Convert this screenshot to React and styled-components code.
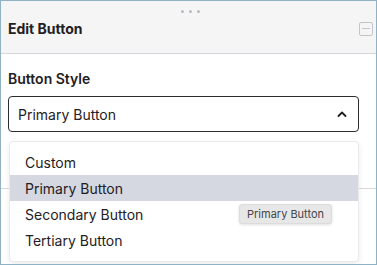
import React from "react";
import styled, { createGlobalStyle } from "styled-components";

const GlobalStyle = createGlobalStyle`
  body {
    margin: 0;
    font-family: Inter, "Liberation Sans", sans-serif;
    color: #1f2023;
  }
`;

const Frame = styled.div`
  position: relative;
  width: 377px;
  height: 265px;
  box-sizing: border-box;
  border: 1px solid #8fb2c5;
  background: #fff;
  overflow: hidden;
`;

const Header = styled.div`
  height: 53px;
  box-sizing: border-box;
  background: #f5f5f6;
  border-bottom: 1px solid #d5d8de;
  display: flex;
  flex-direction: column;
  padding: 9px 3px 0 7px;
`;

const Handle = styled.div`
  display: flex;
  justify-content: center;
  gap: 5px;
  height: 4px;
`;

const Dot = styled.span`
  width: 3px;
  height: 3px;
  border-radius: 50%;
  background: #b8bcc4;
`;

const TitleRow = styled.div`
  display: flex;
  align-items: center;
  justify-content: space-between;
  margin-top: 6px;
`;

const Title = styled.h2`
  margin: 0;
  font-size: 14px;
  font-weight: 700;
  color: #1f2023;
`;

const CollapseBox = styled.span`
  width: 14px;
  height: 14px;
  box-sizing: border-box;
  border: 1.5px solid #c3c5cc;
  border-radius: 2px;
  display: flex;
  align-items: center;
  justify-content: center;

  &::after {
    content: "";
    width: 8px;
    height: 1.5px;
    background: #c3c5cc;
  }
`;

const Section = styled.div`
  height: 135px;
  box-sizing: border-box;
  border-bottom: 1px solid #d5d8de;
  padding: 16px 17px 0 7px;
`;

const Label = styled.div`
  font-size: 14px;
  font-weight: 600;
  margin-bottom: 9px;
  height: 17px;
`;

const Select = styled.div`
  height: 36px;
  box-sizing: border-box;
  border: 1px solid #2b2c30;
  border-radius: 4px;
  display: flex;
  align-items: center;
  justify-content: space-between;
  padding: 0 10px 0 9px;
  font-size: 14px;
`;

const Menu = styled.ul`
  position: absolute;
  left: 8px;
  top: 140px;
  width: 350px;
  margin: 0;
  padding: 7px 0 8px;
  list-style: none;
  box-sizing: border-box;
  background: #fff;
  border: 1px solid #e9e9ee;
  border-radius: 4px;
  box-shadow: 0 2px 6px rgba(0, 0, 0, 0.08);
`;

const Option = styled.li`
  height: 26px;
  display: flex;
  align-items: center;
  padding-left: 15px;
  font-size: 14px;
  color: #1f2023;
  background: ${(props) => (props.active ? "#d5d8e1" : "transparent")};
`;

const Tooltip = styled.div`
  position: absolute;
  left: 238px;
  top: 203px;
  height: 20px;
  box-sizing: border-box;
  padding: 0 7px;
  display: flex;
  align-items: center;
  font-size: 11px;
  color: #454649;
  background: #e7e7e8;
  border: 1px solid #dcdcde;
  border-radius: 3px;
  box-shadow: 0 1px 3px rgba(0, 0, 0, 0.12);
`;

const Chevron = () => (
  <svg width="12" height="8" viewBox="0 0 12 8" fill="none">
    <path
      d="M2.5 6L6 2.5L9.5 6"
      stroke="#1f2023"
      strokeWidth="1.8"
      strokeLinecap="round"
      strokeLinejoin="round"
    />
  </svg>
);

const options = ["Custom", "Primary Button", "Secondary Button", "Tertiary Button"];

const App = () => {
  const selected = "Primary Button";

  return (
    <Frame>
      <GlobalStyle />
      <Header>
        <Handle>
          <Dot />
          <Dot />
          <Dot />
        </Handle>
        <TitleRow>
          <Title>Edit Button</Title>
          <CollapseBox />
        </TitleRow>
      </Header>

      <Section>
        <Label>Button Style</Label>
        <Select>
          {selected}
          <Chevron />
        </Select>
      </Section>

      <Menu>
        {options.map((option) => (
          <Option key={option} active={option === selected}>
            {option}
          </Option>
        ))}
      </Menu>

      <Tooltip>{selected}</Tooltip>
    </Frame>
  );
};

export default App;
